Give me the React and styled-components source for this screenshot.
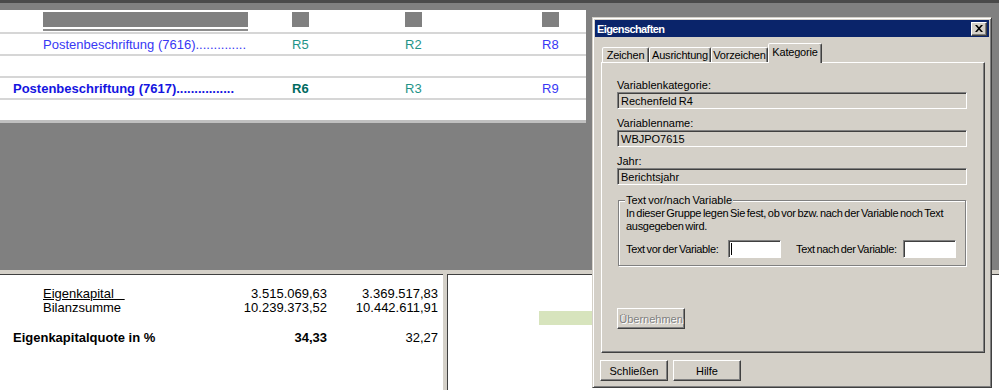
import React from 'react';
import styled, { createGlobalStyle } from 'styled-components';

// --------------------- Styling ----------------------------------------

const GlobalStyle = createGlobalStyle`
  *, *::before, *::after { box-sizing: border-box; }
  html, body { margin: 0; padding: 0; background: #808080; }
  body { font-family: "Liberation Sans", Arial, sans-serif; }
`;

const Screen = styled.div`
  position: relative;
  width: 999px;
  height: 390px;
  overflow: hidden;
  display: flex;
  flex-direction: column;
  background: #808080;
  border-top: 3px solid #4a4a4a;
  font-family: "Liberation Sans", Arial, sans-serif;
`;

const Sheet = styled.div`
  width: 586px;
  margin-top: 7px;
  background: #fff;
  border-bottom: 3px solid #c0c0c0;
`;

const SheetRow = styled.div`
  display: grid;
  grid-template-columns: 292px 113px 137px 1fr;
  align-items: center;
  height: 22px;
  border-top: 2px solid #d6d6d6;
  font-size: 13px;
`;

const HeadRow = styled(SheetRow)`
  align-items: start;
  padding-top: 2px;
  border-top: none;
`;

const HeadBar = styled.div`
  margin-left: 43px;
  width: 205px;
  height: 19px;
  background: linear-gradient(#808080 0 15px, #fff 15px 17px, #8c8c8c 17px 19px);
`;

const HeadBox = styled.div`
  width: 17px;
  height: 15px;
  background: #808080;
`;

const Caption = styled.div`
  padding-left: ${(p) => p.$indent}px;
  color: ${(p) => (p.$bold ? '#1414e0' : '#3838f4')};
  font-weight: ${(p) => (p.$bold ? 'bold' : 'normal')};
  white-space: nowrap;
`;

const Ref = styled.div`
  color: ${(p) => p.$color};
  font-weight: ${(p) => (p.$bold ? 'bold' : 'normal')};
`;

const Gap = styled.div`
  flex: 1;
`;

const Report = styled.div`
  height: 120px;
  flex-shrink: 0;
  display: flex;
  background: #fff;
  border-top: 4px solid #d4d0c8;
  box-shadow: inset 0 1px 0 #404040;
`;

const Figures = styled.div`
  width: 443px;
  padding-top: 13px;
  font-size: 13px;
  line-height: 14px;
`;

const FigureRow = styled.div`
  display: grid;
  grid-template-columns: 230px 97px 111px;
  margin-top: ${(p) => p.$space || 0}px;
  color: #000;
`;

const FigureLabel = styled.div`
  padding-left: ${(p) => p.$indent}px;
  white-space: pre;
  font-weight: ${(p) => (p.$bold ? 'bold' : 'normal')};
  text-decoration: ${(p) => (p.$underline ? 'underline' : 'none')};
`;

const Amount = styled.div`
  text-align: right;
  font-weight: ${(p) => (p.$bold ? 'bold' : 'normal')};
`;

const Divider = styled.div`
  width: 5px;
  background: linear-gradient(to right, #d4d0c8 0 4px, #404040 4px 5px);
`;

const Chart = styled.div`
  flex: 1;
  padding-top: 37px;
  padding-left: 91px;
`;

const ChartBar = styled.div`
  width: 70px;
  height: 14px;
  background: #d7e4bd;
`;

// ------------------------------ Dialog -------------------------------

const Window = styled.div`
  position: absolute;
  left: 592px;
  top: 14px;
  width: 400px;
  height: 371px;
  display: flex;
  flex-direction: column;
  padding: 2px;
  background: #d4d0c8;
  border: 1px solid;
  border-color: #d4d0c8 #404040 #404040 #d4d0c8;
  box-shadow: inset 1px 1px 0 #fff, inset -1px -1px 0 #808080;
  font-size: 11px;
  word-spacing: -1px;
  color: #000;
`;

const TitleBar = styled.div`
  height: 17px;
  display: flex;
  align-items: center;
  justify-content: space-between;
  padding: 0 2px 0 2px;
  background: #0a246a;
  color: #fff;
  font-weight: bold;
  font-size: 11px;
  letter-spacing: -0.6px;
  word-spacing: 0;
`;

const CloseBox = styled.div`
  width: 16px;
  height: 14px;
  display: flex;
  align-items: center;
  justify-content: center;
  background: #d4d0c8;
  border: 1px solid;
  border-color: #fff #404040 #404040 #fff;
  box-shadow: inset -1px -1px 0 #808080;
`;

const WindowBody = styled.div`
  flex: 1;
  display: flex;
  flex-direction: column;
  padding: 6px 4px 0 6px;
`;

const TabStrip = styled.div`
  display: flex;
  align-items: flex-end;
  height: 19px;
  padding-left: 1px;
  position: relative;
  z-index: 1;
`;

const Tab = styled.div`
  width: ${(p) => p.$w}px;
  height: ${(p) => (p.$active ? 20 : 15)}px;
  margin: ${(p) => (p.$active ? '0 0 -1px 0' : '0')};
  display: flex;
  align-items: ${(p) => (p.$active ? 'flex-start' : 'center')};
  padding-top: ${(p) => (p.$active ? 2 : 0)}px;
  justify-content: center;
  background: #d4d0c8;
  border: 1px solid;
  border-bottom: none;
  border-color: #fff #404040 transparent #fff;
  border-radius: 2px 2px 0 0;
  box-shadow: inset -1px 0 0 #808080;
  white-space: nowrap;
  letter-spacing: -0.2px;
`;

const TabPanel = styled.div`
  height: 291px;
  display: flex;
  flex-direction: column;
  padding: 16px 17px 0 15px;
  border: 1px solid;
  border-color: #fff #404040 #404040 #fff;
  box-shadow: inset -1px -1px 0 #808080;
`;

const FieldLabel = styled.div`
  line-height: 13px;
  height: 13px;
`;

const Field = styled.div`
  height: 17px;
  margin-bottom: 8px;
  display: flex;
  align-items: center;
  padding-left: 3px;
  background: ${(p) => (p.$white ? '#fff' : '#d4d0c8')};
  border: 1px solid;
  border-color: #808080 #fff #fff #808080;
  box-shadow: inset 1px 1px 0 #404040;
`;

const GroupBox = styled.div`
  margin: 7px 1px 0 1px;
  padding: 0 7px 7px 7px;
  border: 1px solid #808080;
  box-shadow: inset 1px 1px 0 #fff, 1px 1px 0 #fff;
`;

const GroupTitle = styled.div`
  width: fit-content;
  margin: -7px 0 0 -1px;
  padding: 0 1px;
  line-height: 13px;
  background: #d4d0c8;
`;

const GroupText = styled.div`
  line-height: 13px;
  white-space: nowrap;
  letter-spacing: -0.3px;
`;

const InputRow = styled.div`
  display: grid;
  grid-template-columns: 102px 68px 107px 53px;
  align-items: center;
  margin-top: 7px;
  white-space: nowrap;
  letter-spacing: -0.35px;
`;

const TextBox = styled(Field)`
  width: 53px;
  height: 18px;
  margin: 0;
  padding-left: 2px;
`;

const Caret = styled.span`
  width: 1px;
  height: 12px;
  background: #000;
`;

const Button = styled.div`
  width: 68px;
  height: 21px;
  display: flex;
  align-items: center;
  justify-content: center;
  margin-top: ${(p) => p.$top || 0}px;
  background: #d4d0c8;
  border: 1px solid;
  border-color: #fff #404040 #404040 #fff;
  box-shadow: inset -1px -1px 0 #808080;
  color: ${(p) => (p.$disabled ? '#808080' : '#000')};
  text-shadow: ${(p) => (p.$disabled ? '1px 1px 0 #fff' : 'none')};
`;

const ButtonBar = styled.div`
  display: flex;
  gap: 5px;
  margin-top: 7px;
  margin-left: -1px;
`;

// ------------------------------------ COMPONENT -------------------------------

const TEAL = '#1f9488';
const BLUE = '#3838f4';

const rows = [
  {
    label: 'Postenbeschriftung (7616)..............', indent: 43, bold: false,
    refs: [['R5', TEAL, false], ['R2', TEAL, false], ['R8', BLUE, false]],
  },
  null,
  {
    label: 'Postenbeschriftung (7617)................', indent: 13, bold: true,
    refs: [['R6', '#006a60', true], ['R3', TEAL, false], ['R9', BLUE, false]],
  },
  null,
];

const tabs = [
  ['Zeichen', 47],
  ['Ausrichtung', 62],
  ['Vorzeichen', 57],
  ['Kategorie', 54, true],
];

const fields = [
  ['Variablenkategorie:', 'Rechenfeld R4'],
  ['Variablenname:', 'WBJPO7615'],
  ['Jahr:', 'Berichtsjahr'],
];

export default function App() {
  return (
    <Screen>
      <GlobalStyle />
      <Sheet>
        <HeadRow>
          <HeadBar />
          <HeadBox />
          <HeadBox />
          <HeadBox />
        </HeadRow>
        {rows.map((row, i) => (
          <SheetRow key={i}>
            {row && (
              <>
                <Caption $indent={row.indent} $bold={row.bold}>{row.label}</Caption>
                {row.refs.map(([txt, color, bold]) => (
                  <Ref key={txt} $color={color} $bold={bold}>{txt}</Ref>
                ))}
              </>
            )}
          </SheetRow>
        ))}
      </Sheet>
      <Gap />
      <Report>
        <Figures>
          <FigureRow>
            <FigureLabel $indent={43} $underline>{'Eigenkapital   '}</FigureLabel>
            <Amount>3.515.069,63</Amount>
            <Amount>3.369.517,83</Amount>
          </FigureRow>
          <FigureRow>
            <FigureLabel $indent={43}>Bilanzsumme</FigureLabel>
            <Amount>10.239.373,52</Amount>
            <Amount>10.442.611,91</Amount>
          </FigureRow>
          <FigureRow $space={16}>
            <FigureLabel $indent={13} $bold>Eigenkapitalquote in %</FigureLabel>
            <Amount $bold>34,33</Amount>
            <Amount>32,27</Amount>
          </FigureRow>
        </Figures>
        <Divider />
        <Chart>
          <ChartBar />
        </Chart>
      </Report>

      <Window>
        <TitleBar>
          <span>Eigenschaften</span>
          <CloseBox>
            <svg width="8" height="7" viewBox="0 0 8 7">
              <path d="M0 0h2l2 2.2L6 0h2L5 3.5 8 7H6L4 4.8 2 7H0l3-3.5z" fill="#000" />
            </svg>
          </CloseBox>
        </TitleBar>
        <WindowBody>
          <TabStrip>
            {tabs.map(([name, w, active]) => (
              <Tab key={name} $w={w} $active={active}>{name}</Tab>
            ))}
          </TabStrip>
          <TabPanel>
            {fields.map(([label, value]) => (
              <React.Fragment key={label}>
                <FieldLabel>{label}</FieldLabel>
                <Field>{value}</Field>
              </React.Fragment>
            ))}
            <GroupBox>
              <GroupTitle>Text vor/nach Variable</GroupTitle>
              <GroupText>
                In dieser Gruppe legen Sie fest, ob vor bzw. nach der Variable noch Text
                <br />
                ausgegeben wird.
              </GroupText>
              <InputRow>
                <span>Text vor der Variable:</span>
                <TextBox $white><Caret /></TextBox>
                <span>Text nach der Variable:</span>
                <TextBox $white />
              </InputRow>
            </GroupBox>
            <Button $top={42} $disabled>Übernehmen</Button>
          </TabPanel>
          <ButtonBar>
            <Button>Schließen</Button>
            <Button>Hilfe</Button>
          </ButtonBar>
        </WindowBody>
      </Window>
    </Screen>
  );
}
